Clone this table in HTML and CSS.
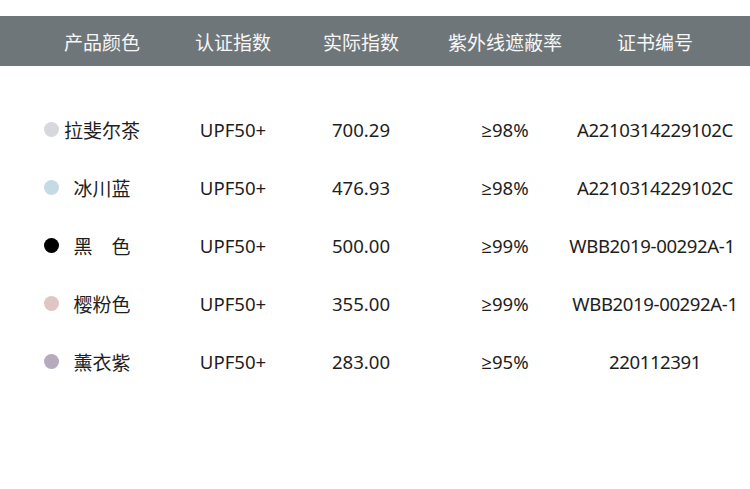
FILE: index.html
```html
<!DOCTYPE html>
<html lang="zh">
<head>
<meta charset="utf-8">
<link rel="stylesheet" href="styles.css">
</head>
<body>
<div class="table">
  <div class="row head">
    <div class="cell">产品颜色</div>
    <div class="cell">认证指数</div>
    <div class="cell">实际指数</div>
    <div class="cell">紫外线遮蔽率</div>
    <div class="cell">证书编号</div>
  </div>
  <div class="body">
    <div class="row item">
      <div class="cell name"><span class="dot c1"></span><span class="label">拉斐尔茶</span></div>
      <div class="cell">UPF50+</div>
      <div class="cell">700.29</div>
      <div class="cell">≥98%</div>
      <div class="cell cert">A2210314229102C</div>
    </div>
    <div class="row item">
      <div class="cell name"><span class="dot c2"></span><span class="label">冰川蓝</span></div>
      <div class="cell">UPF50+</div>
      <div class="cell">476.93</div>
      <div class="cell">≥98%</div>
      <div class="cell cert">A2210314229102C</div>
    </div>
    <div class="row item">
      <div class="cell name"><span class="dot c3"></span><span class="label">黑　色</span></div>
      <div class="cell">UPF50+</div>
      <div class="cell">500.00</div>
      <div class="cell">≥99%</div>
      <div class="cell cert left">WBB2019-00292A-1</div>
    </div>
    <div class="row item">
      <div class="cell name"><span class="dot c4"></span><span class="label">樱粉色</span></div>
      <div class="cell">UPF50+</div>
      <div class="cell">355.00</div>
      <div class="cell">≥99%</div>
      <div class="cell cert">WBB2019-00292A-1</div>
    </div>
    <div class="row item">
      <div class="cell name"><span class="dot c5"></span><span class="label">薰衣紫</span></div>
      <div class="cell">UPF50+</div>
      <div class="cell">283.00</div>
      <div class="cell">≥95%</div>
      <div class="cell cert">220112391</div>
    </div>
  </div>
</div>
</body>
</html>
```
FILE: styles.css
```css
* { box-sizing: border-box; }
html, body { margin: 0; padding: 0; background: #fff; }
body {
  width: 750px;
  height: 489px;
  overflow: hidden;
  font-family: "Noto Sans", "Open Sans", "DejaVu Sans", "Noto Sans CJK SC", sans-serif;
  color: #1e1e1e;
}
.table { padding-top: 16px; }
.row {
  display: grid;
  grid-template-columns: 116px 146px 110px 178px 122px;
  padding-left: 44px;
  align-items: center;
}
.head {
  height: 50px;
  background: #6f7679;
  color: #f7f7f7;
  font-size: 19px;
}
.body { padding-top: 34px; }
.item {
  height: 58px;
  font-size: 18.6px;
}
.cell {
  display: flex;
  justify-content: center;
  white-space: nowrap;
}
.cert { letter-spacing: -0.4px; }
.left { padding-right: 6px; }
.name {
  display: grid;
  grid-template-columns: 100%;
  align-items: center;
  font-size: 19px;
}
.name > * { grid-area: 1 / 1; }
.dot {
  justify-self: start;
  width: 15px;
  height: 15px;
  border-radius: 50%;
}
.label { justify-self: center; font-family: "Noto Sans CJK SC", sans-serif; }
.head .cell { font-family: "Noto Sans CJK SC", sans-serif; }
.c1 { background: #d6d8de; }
.c2 { background: #c4dbe4; }
.c3 { background: #000; }
.c4 { background: #e0c6c2; }
.c5 { background: #b8aabd; }
```
